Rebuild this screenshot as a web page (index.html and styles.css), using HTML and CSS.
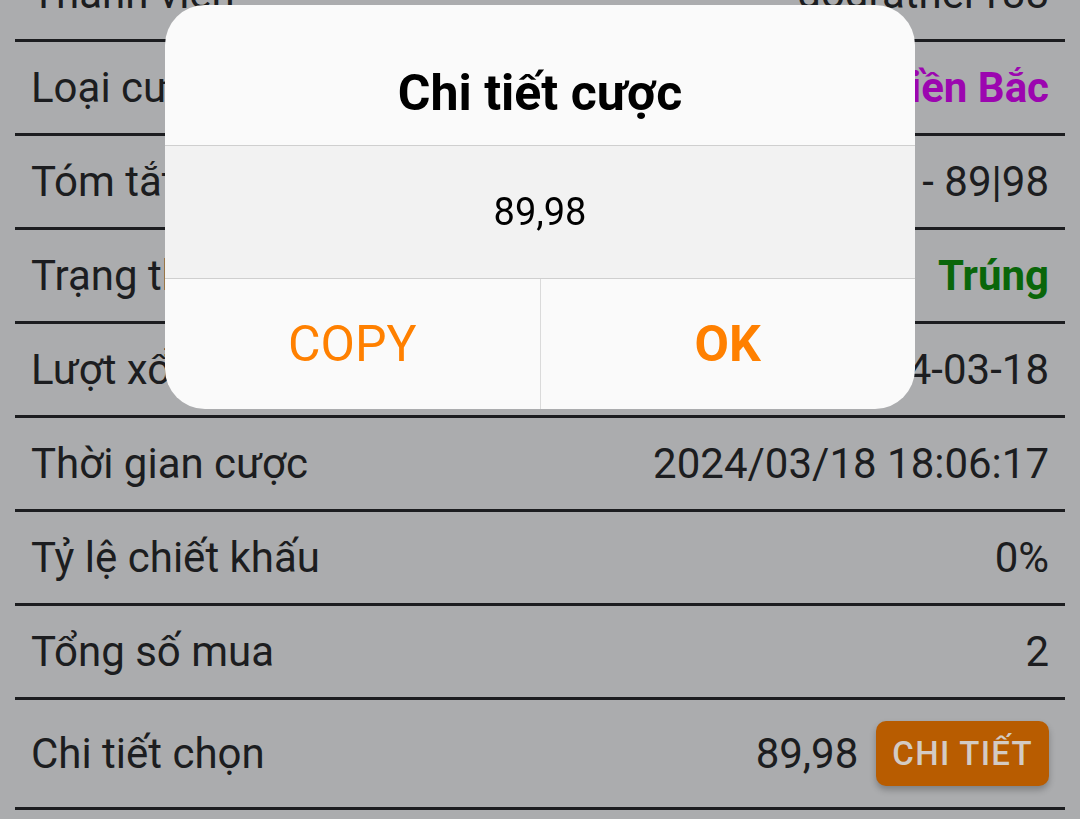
FILE: index.html
```html
<!DOCTYPE html>
<html lang="vi">

<head>
    <meta charset="UTF-8">
    <meta name="viewport" content="width=device-width, initial-scale=1.0">
    <title>Chi tiết cược</title>
    <link rel="stylesheet" href="styles.css">
</head>

<body>
    <div class="details">
        <div class="row">
            <span class="label">Thành viên</span>
            <span class="value">dodrather188</span>
        </div>
        <div class="row">
            <span class="label">Loại cược</span>
            <span class="value purple">Xổ số Miền Bắc</span>
        </div>
        <div class="row">
            <span class="label">Tóm tắt</span>
            <span class="value">Lô 2 số - 89|98</span>
        </div>
        <div class="row">
            <span class="label">Trạng thái</span>
            <span class="value green">Trúng</span>
        </div>
        <div class="row">
            <span class="label">Lượt xổ</span>
            <span class="value">2024-03-18</span>
        </div>
        <div class="row">
            <span class="label">Thời gian cược</span>
            <span class="value">2024/03/18 18:06:17</span>
        </div>
        <div class="row">
            <span class="label">Tỷ lệ chiết khấu</span>
            <span class="value">0%</span>
        </div>
        <div class="row">
            <span class="label">Tổng số mua</span>
            <span class="value">2</span>
        </div>
        <div class="row row-btn">
            <span class="label">Chi tiết chọn</span>
            <span class="value">
                89,98
                <button class="detail-btn">CHI TIẾT</button>
            </span>
        </div>
    </div>

    <!-- dialog shown over the dimmed page -->
    <div class="dialog">
        <div class="dialog-title">Chi tiết cược</div>
        <div class="dialog-message">89,98</div>
        <div class="dialog-actions">
            <button class="dialog-btn">COPY</button>
            <button class="dialog-btn bold">OK</button>
        </div>
    </div>
</body>

</html>
```

FILE: styles.css
```css
html,
body {
    height: 100%;
    overflow: hidden;
}

body {
    font-family: Roboto, "Noto Sans", sans-serif;
    background-color: #abacae;
    color: #1c1d20;
    margin: 0;
    padding: 0;
}

.details {
    margin: -52px 15px 0;
}

.row {
    display: flex;
    align-items: center;
    justify-content: space-between;
    min-height: 91px;
    padding: 0 16px;
    border-bottom: 3px solid #1c1d20;
    font-size: 42px;
}

.row-btn {
    padding-top: 21px;
    padding-bottom: 21px;
    min-height: 65px;
}

.value {
    display: flex;
    align-items: center;
    gap: 18px;
}

.purple {
    color: #9c06b0;
    font-weight: bold;
}

.green {
    color: #0a660a;
    font-weight: bold;
}

.detail-btn {
    height: 65px;
    padding: 0 16px;
    background-color: #b85c00;
    color: #d3cbc4;
    border: none;
    border-radius: 10px;
    font-family: Roboto, sans-serif;
    font-size: 33px;
    font-weight: 500;
    letter-spacing: 1.3px;
    box-shadow: 0 4px 6px rgba(0, 0, 0, 0.25);
}

.dialog {
    position: fixed;
    top: 5px;
    left: 165px;
    right: 165px;
    background-color: #fafafa;
    border-radius: 40px;
    overflow: hidden;
    color: #000;
}

.dialog-title {
    box-sizing: border-box;
    height: 141px;
    padding-top: 59px;
    text-align: center;
    line-height: 1.172;
    font-size: 50px;
    font-weight: bold;
    border-bottom: 1px solid #cfcfcf;
}

.dialog-message {
    height: 132px;
    display: flex;
    align-items: center;
    justify-content: center;
    background-color: #f2f2f2;
    font-size: 38px;
    border-bottom: 1px solid #cfcfcf;
}

.dialog-actions {
    display: flex;
    height: 130px;
}

.dialog-btn {
    flex: 1;
    background: none;
    border: none;
    color: #ff8000;
    font-family: Roboto, sans-serif;
    font-size: 50px;
}

.dialog-btn + .dialog-btn {
    border-left: 1px solid #dadada;
}

.dialog-btn.bold {
    font-weight: bold;
}
```
